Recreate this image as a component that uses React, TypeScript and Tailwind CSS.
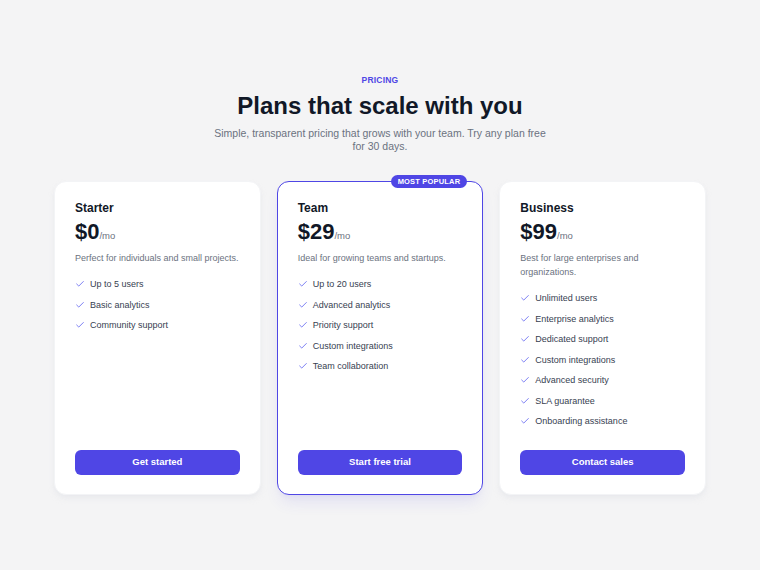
import React from 'react';
import { Check } from 'lucide-react';

type Plan = {
  name: string;
  price: string;
  blurb: string;
  features: string[];
  cta: string;
  popular?: boolean;
};

const PLANS: Plan[] = [
  {
    name: 'Starter',
    price: '$0',
    blurb: 'Perfect for individuals and small projects.',
    features: ['Up to 5 users', 'Basic analytics', 'Community support'],
    cta: 'Get started',
  },
  {
    name: 'Team',
    price: '$29',
    blurb: 'Ideal for growing teams and startups.',
    features: ['Up to 20 users', 'Advanced analytics', 'Priority support', 'Custom integrations', 'Team collaboration'],
    cta: 'Start free trial',
    popular: true,
  },
  {
    name: 'Business',
    price: '$99',
    blurb: 'Best for large enterprises and organizations.',
    features: [
      'Unlimited users',
      'Enterprise analytics',
      'Dedicated support',
      'Custom integrations',
      'Advanced security',
      'SLA guarantee',
      'Onboarding assistance',
    ],
    cta: 'Contact sales',
  },
];

const PlanCard: React.FC<{ plan: Plan }> = ({ plan }) => (
  <div
    className={`relative flex flex-col bg-white rounded-xl px-5 pt-[17px] pb-[19px] ${
      plan.popular
        ? 'border-[1.5px] border-[#4f46e5] shadow-lg shadow-[#4f46e5]/10'
        : 'border border-gray-100 shadow-md shadow-gray-200/70'
    }`}
  >
    {plan.popular && (
      <span className="absolute -top-[7px] right-[15px] bg-[#4f46e5] text-white text-[7.5px] leading-[13px] font-bold tracking-wide px-[7px] rounded-full">
        MOST POPULAR
      </span>
    )}

    <h3 className="text-[12px] leading-[18px] font-bold text-[#111827]">{plan.name}</h3>
    <div className="mt-[2px] flex items-baseline">
      <span className="text-[22px] leading-[26px] font-bold text-[#111827]">{plan.price}</span>
      <span className="text-[9.5px] text-[#6b7280]">/mo</span>
    </div>
    <p className="mt-[6px] text-[9px] leading-[14px] text-[#6b7280]">{plan.blurb}</p>

    <ul className="mt-3 flex flex-col gap-[6.5px]">
      {plan.features.map(f => (
        <li key={f} className="flex items-center gap-[5px] text-[9px] leading-[14px] text-[#374151]">
          <Check size={10} strokeWidth={2} className="text-[#6366f1] shrink-0" />
          {f}
        </li>
      ))}
    </ul>

    <button className="mt-auto h-[25px] w-full rounded-md bg-[#4f46e5] text-white text-[9.5px] font-bold">
      {plan.cta}
    </button>
  </div>
);

export default function App() {
  return (
    <div className="min-h-screen bg-[#f4f4f5] pt-[74px] [font-family:'Liberation_Sans',Arial,sans-serif]">
      {/* Header */}
      <div className="flex flex-col items-center text-center">
        <span className="text-[8.5px] leading-[12px] font-bold tracking-wide text-[#4f46e5]">PRICING</span>
        <h1 className="mt-1 text-[24px] leading-[32px] font-bold text-[#111827]">Plans that scale with you</h1>
        <p className="mt-[5px] max-w-[345px] text-[10.5px] leading-[13px] text-[#6b7280]">
          Simple, transparent pricing that grows with your team. Try any plan free for 30 days.
        </p>
      </div>

      {/* Cards */}
      <div className="mx-auto mt-[28px] w-[652px] grid grid-cols-3 gap-4 h-[314px]">
        {PLANS.map(p => (
          <PlanCard key={p.name} plan={p} />
        ))}
      </div>
    </div>
  );
}
